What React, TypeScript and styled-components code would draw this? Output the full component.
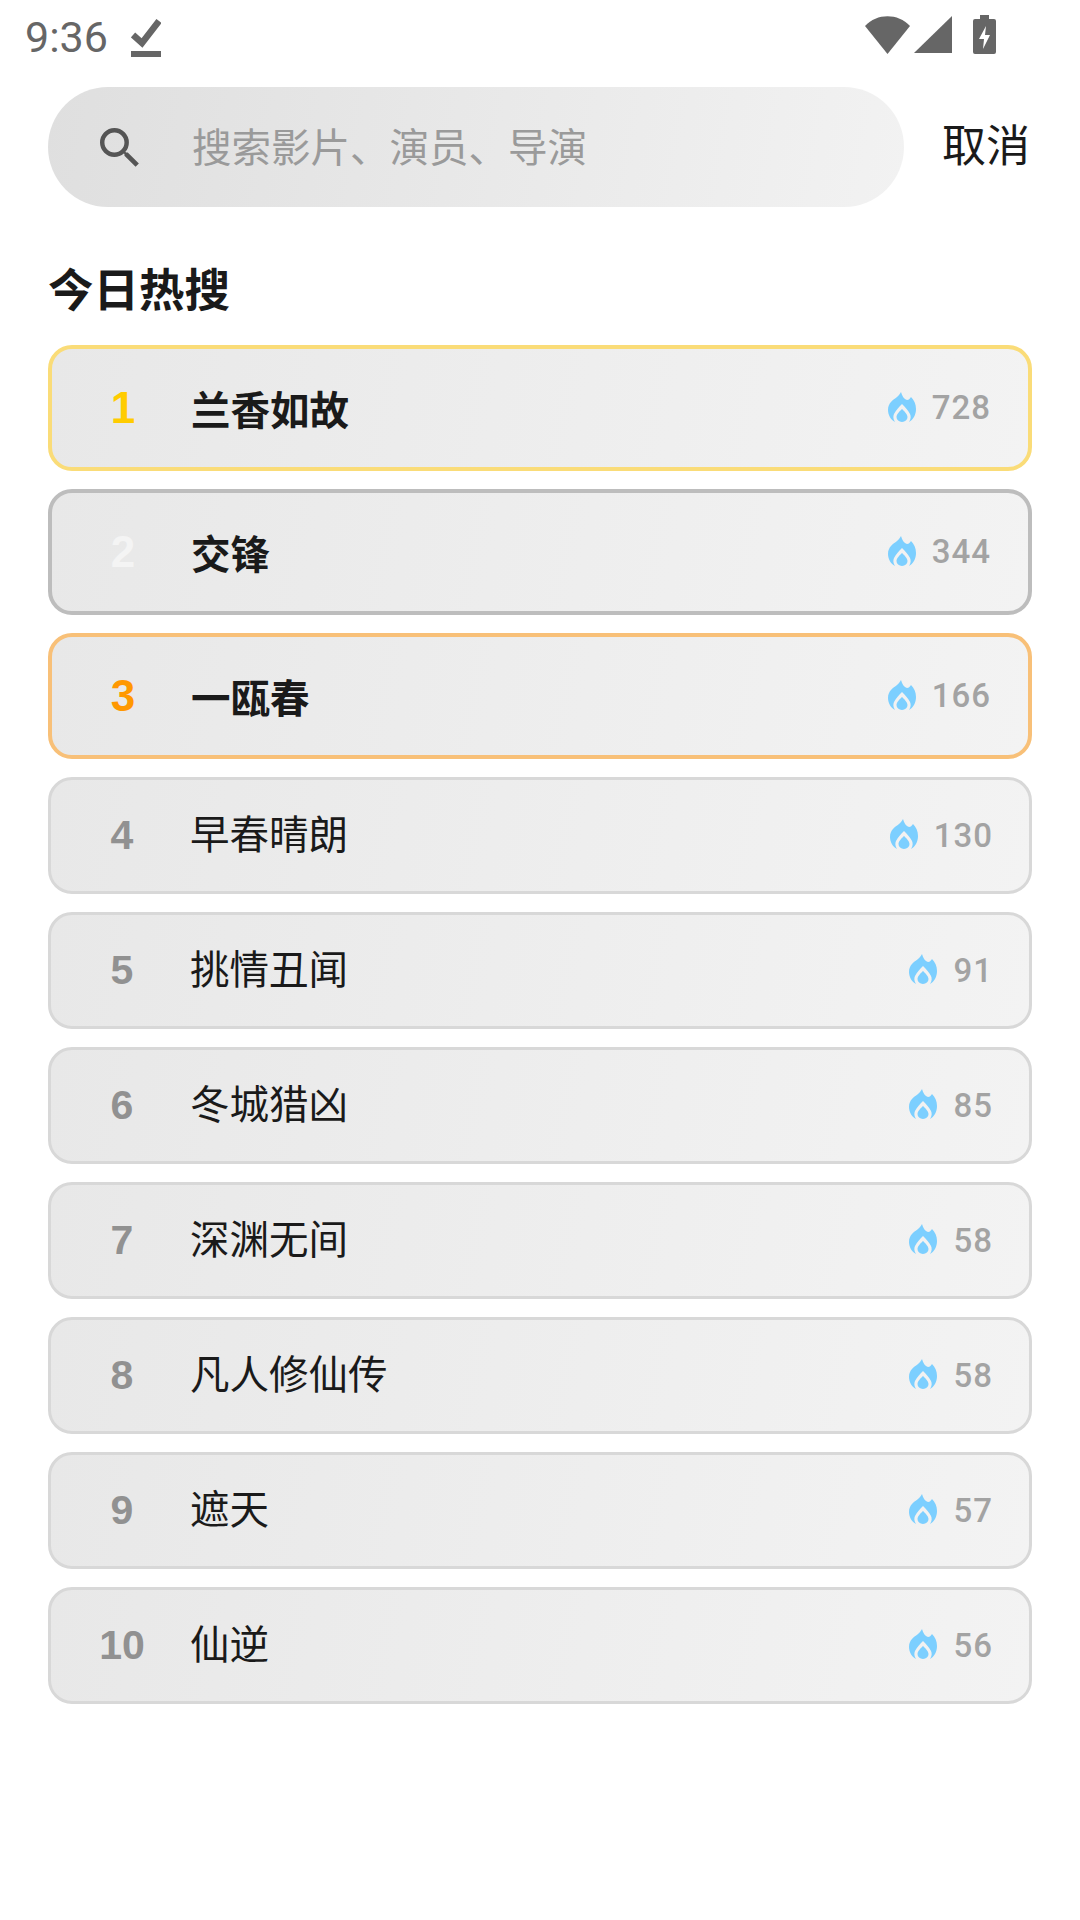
import React from "react";
import styled, { createGlobalStyle } from "styled-components";

interface IHotItem {
  title: string;
  count: number;
}

const hotList: IHotItem[] = [
  { title: "兰香如故", count: 728 },
  { title: "交锋", count: 344 },
  { title: "一瓯春", count: 166 },
  { title: "早春晴朗", count: 130 },
  { title: "挑情丑闻", count: 91 },
  { title: "冬城猎凶", count: 85 },
  { title: "深渊无间", count: 58 },
  { title: "凡人修仙传", count: 58 },
  { title: "遮天", count: 57 },
  { title: "仙逆", count: 56 }
];

const topBorder = ["#fadc78", "#bdbdbd", "#f8c078"];
const topRank = ["#ffcc00", "#f4f4f4", "#ff9800"];

const FlameIcon = () => (
  <Flame viewBox="0 0 28 30">
    <path
      fill="#7ccfff"
      d="M13 0C14 4 16 7 19 8C21 8 22 6 23 5C26 8 28 12 28 17C28 23 25 28 21 30C23 27 23 24 22 22C20 18 17 15 14 12C11 15 8 18 6 22C5 24 5 27 7 30C3 28 0 23 0 18C0 11 5 8 9 5C11 3 12 2 13 0Z"
    />
    <path
      fill="#7ccfff"
      d="M14 17C16 19 19.5 22 19.5 25A5.5 5 0 0 1 8.5 25C8.5 22 12 19 14 17Z"
    />
  </Flame>
);

const App = () => {
  return (
    <Page>
      <GlobalStyle />
      <StatusBar>
        <StatusLeft>
          <Time>9:36</Time>
          <StatusIcon width="30" height="39" viewBox="0 0 30 39">
            <path fill="#666" d="M0 33h30v6H0z" />
            <path fill="none" stroke="#666" strokeWidth="6.5" d="M2 17l9 8L28 3" />
          </StatusIcon>
        </StatusLeft>
        <StatusRight>
          <StatusIcon width="45" height="38" viewBox="0 0 45 38">
            <path fill="#666" d="M0 10C12 -3 33 -3 45 10L22.5 38Z" />
          </StatusIcon>
          <StatusIcon width="38" height="37" viewBox="0 0 38 37">
            <path fill="#666" d="M38 0V37H0Z" />
          </StatusIcon>
          <BatteryIcon width="23" height="39" viewBox="0 0 23 39">
            <path
              fill="#666"
              d="M7 0h9v4h5a2 2 0 0 1 2 2v31a2 2 0 0 1-2 2H2a2 2 0 0 1-2-2V6a2 2 0 0 1 2-2h5z"
            />
            <path fill="#fff" d="M13 11L6 24h5l-1 10 7-14h-5z" />
          </BatteryIcon>
        </StatusRight>
      </StatusBar>
      <SearchRow>
        <SearchBar>
          <SearchIcon width="40" height="40" viewBox="3 3 18 18">
            <path
              fill="#555"
              d="M15.5 14h-.79l-.28-.27A6.47 6.47 0 0 0 16 9.5 6.5 6.5 0 1 0 9.5 16c1.61 0 3.09-.59 4.23-1.57l.27.28v.79l5 4.99L20.49 19l-4.99-5zm-6 0C7.01 14 5 11.99 5 9.5S7.01 5 9.5 5 14 7.01 14 9.5 11.99 14 9.5 14z"
            />
          </SearchIcon>
          <Placeholder>搜索影片、演员、导演</Placeholder>
        </SearchBar>
        <Cancel>取消</Cancel>
      </SearchRow>
      <Title>今日热搜</Title>
      <List>
        {hotList.map((item, index) => (
          <Row key={item.title} $rank={index}>
            <Rank $rank={index}>{index + 1}</Rank>
            <Name $top={index < 3}>{item.title}</Name>
            <Heat>
              <FlameIcon />
              <Count>{item.count}</Count>
            </Heat>
          </Row>
        ))}
      </List>
    </Page>
  );
};

export default App;

const GlobalStyle = createGlobalStyle`
  html, body {
    margin: 0;
    padding: 0;
    background: #fff;
  }
`;

const Page = styled.div`
  width: 1080px;
  height: 1920px;
  overflow: hidden;
  background: #fff;
  font-family: Roboto, "Noto Sans CJK SC", sans-serif;
`;

const StatusBar = styled.div`
  height: 87px;
  box-sizing: border-box;
  padding: 15px 84px 0 25px;
  display: flex;
  justify-content: space-between;
  align-items: flex-start;
`;

const StatusLeft = styled.div`
  display: flex;
  align-items: center;
  gap: 22px;
`;

const StatusRight = styled.div`
  display: flex;
  align-items: flex-start;
  gap: 4px;
  padding-top: 1px;
`;

const Time = styled.span`
  font-size: 43px;
  line-height: 44px;
  color: #666;
  width: 84px;
`;

const StatusIcon = styled.svg`
  display: block;
`;

const BatteryIcon = styled.svg`
  display: block;
  margin-left: 17px;
  margin-top: -1px;
`;

const SearchRow = styled.div`
  display: flex;
  align-items: center;
  padding-left: 48px;
`;

const SearchBar = styled.div`
  width: 856px;
  height: 120px;
  border-radius: 60px;
  display: flex;
  align-items: center;
  padding-left: 52px;
  box-sizing: border-box;
  background: linear-gradient(100deg, #dfdfdf 0%, #f2f2f2 100%);
`;

const SearchIcon = styled.svg`
  display: block;
  flex-shrink: 0;
  margin-top: 1px;
`;

const Placeholder = styled.span`
  margin-left: 52px;
  margin-top: 3px;
  font-size: 39.5px;
  line-height: 50px;
  color: #9a9a9a;
`;

const Cancel = styled.span`
  margin-left: 38px;
  font-size: 44px;
  line-height: 52px;
  color: #1a1a1a;
`;

const Title = styled.h2`
  margin: 58px 0 0 48px;
  font-size: 45.5px;
  line-height: 54px;
  font-weight: 700;
  color: #1a1a1a;
`;

const List = styled.div`
  margin: 26px 48px 0;
  display: flex;
  flex-direction: column;
  gap: 18px;
`;

const Row = styled.div<{ $rank: number }>`
  height: ${(p) => (p.$rank < 3 ? 126 : 117)}px;
  box-sizing: border-box;
  display: flex;
  align-items: center;
  padding-right: ${(p) => (p.$rank < 3 ? 37 : 36)}px;
  border-radius: 24px;
  border: ${(p) => (p.$rank < 3 ? 4 : 3)}px solid
    ${(p) => topBorder[p.$rank] || "#d8d8d8"};
  background: linear-gradient(100deg, #e8e8e8 0%, #f3f3f3 100%);
`;

const Rank = styled.span<{ $rank: number }>`
  width: 139px;
  padding-left: 3px;
  box-sizing: border-box;
  text-align: center;
  flex-shrink: 0;
  font-family: "Liberation Sans", Arial, sans-serif;
  font-size: ${(p) => (p.$rank < 3 ? 44 : 41)}px;
  font-weight: 700;
  color: ${(p) => topRank[p.$rank] || "#919191"};
`;

const Name = styled.span<{ $top: boolean }>`
  flex: 1;
  font-size: 39.5px;
  line-height: 48px;
  margin-top: ${(p) => (p.$top ? 7 : 0)}px;
  font-weight: ${(p) => (p.$top ? 700 : 400)};
  color: #1a1a1a;
`;

const Heat = styled.div`
  display: flex;
  align-items: center;
  gap: 16px;
`;

const Flame = styled.svg`
  width: 28px;
  height: 30px;
  display: block;
  margin-top: -3px;
`;

const Count = styled.span`
  font-size: 33px;
  line-height: 40px;
  font-weight: 500;
  letter-spacing: 1px;
  color: #a3a3a3;
`;
